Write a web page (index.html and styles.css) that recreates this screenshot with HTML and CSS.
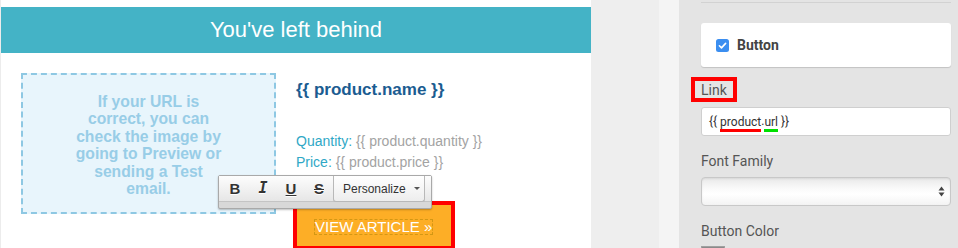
FILE: index.html
```html
<!DOCTYPE html>
<html>
<head>
<meta charset="utf-8">
<link rel="stylesheet" href="styles.css">
</head>
<body>
<div class="app">
  <div class="email">
    <div class="hdr">You've left behind</div>
    <div class="row">
      <div class="ph"><div class="ph-text">If your URL is<br>correct, you can<br>check the image by<br>going to Preview or<br>sending a Test<br>email.</div></div>
      <div class="info">
        <div class="pname">{{ product.name }}</div>
        <div class="meta first"><span class="k">Quantity:</span> <span class="v">{{ product.quantity }}</span></div>
        <div class="meta"><span class="k">Price:</span> <span class="v">{{ product.price }}</span></div>
        <a class="btn"><span class="btn-txt">VIEW ARTICLE »</span></a>
      </div>
    </div>
    <div class="toolbar">
      <div class="tb-row">
        <span class="tb-b b">B</span>
        <span class="tb-b i">I</span>
        <span class="tb-b u">U</span>
        <span class="tb-b s">S</span>
        <span class="pers">Personalize <span class="caret"></span></span>
      </div>
      <div class="tb-strip"></div>
    </div>
  </div>
  <div class="gut1"></div>
  <div class="gut2"></div>
  <div class="panel">
    <div class="topline"></div>
    <div class="card">
      <span class="cb"><svg width="13" height="13" viewBox="0 0 13 13"><rect x="0" y="0" width="13" height="13" rx="2.5" fill="#3b8ef0"/><path d="M3.4 6.8 L5.5 8.9 L9.6 4.4" fill="none" stroke="#fff" stroke-width="1.6" stroke-linecap="round" stroke-linejoin="round"/></svg></span>
      <span class="cb-label">Button</span>
    </div>
    <div class="lbl-wrap"><span class="lbl hl">Link</span></div>
    <div class="input"><span>{{ </span><span class="ul-red">product</span><span>.</span><span class="ul-green">url</span><span> }}</span></div>
    <div class="lbl">Font Family</div>
    <div class="select"><svg class="arr" width="7" height="11" viewBox="0 0 7 11"><path d="M3.5 0.5 L6.5 4.5 L0.5 4.5 Z M3.5 10.5 L6.5 6.5 L0.5 6.5 Z" fill="#444"/></svg></div>
    <div class="lbl bc">Button Color</div>
    <div class="swatch"></div>
  </div>
</div>
</body>
</html>
```

FILE: styles.css
```css
html, body {
  margin: 0;
  padding: 0;
  background: #e4e4e4;
}
.app {
  display: flex;
  width: 958px;
  height: 248px;
  overflow: hidden;
}
.email {
  position: relative;
  width: 590px;
  border-left: 1px solid #ececec;
  background: #fff;
  padding-top: 7px;
  font-family: "Liberation Sans", Arial, sans-serif;
  flex: none;
}
.hdr {
  height: 46px;
  line-height: 46px;
  background: #44b3c6;
  color: #fff;
  font-size: 22px;
  text-align: center;
}
.row {
  display: flex;
  padding: 20px 0 0 20px;
}
.ph {
  width: 255px;
  height: 141px;
  box-sizing: border-box;
  border: 2px dashed #8ec8e3;
  background: #e8f5fc;
  display: flex;
  align-items: center;
  justify-content: center;
  flex: none;
}
.ph-text {
  padding-top: 3px;
  color: #98cde7;
  font-weight: bold;
  font-size: 15.7px;
  line-height: 17.5px;
  text-align: center;
}
.info {
  margin-left: 20px;
  padding-top: 7px;
}
.pname {
  font-size: 17px;
  font-weight: bold;
  line-height: 20px;
  color: #1b5c91;
}
.meta {
  font-size: 14px;
  line-height: 21px;
}
.meta.first {
  margin-top: 31px;
}
.k {
  color: #2fa8c6;
}
.v {
  color: #a3a3a3;
}
.btn {
  display: inline-block;
  margin-top: 28px;
  margin-left: -3px;
  border: 4px solid #ff0000;
  background: #fdae26;
  padding: 13px 18px 10px 17px;
}
.btn-txt {
  display: inline-block;
  border: 1px dashed #d39714;
  color: #fff;
  font-size: 15px;
  line-height: 14px;
}
.toolbar {
  position: absolute;
  left: 217px;
  top: 175px;
  width: 212px;
  border: 1px solid #a9a9a9;
  border-radius: 2px;
  box-shadow: 0 1px 2px rgba(0, 0, 0, 0.25);
  background: #d8d8d8;
}
.tb-row {
  display: flex;
  align-items: flex-start;
  height: 26px;
  padding-left: 2px;
  background: linear-gradient(#fdfdfd, #e6e6e6);
  border-bottom: 1px solid #c4c4c4;
  box-sizing: border-box;
}
.tb-b {
  width: 28px;
  height: 25px;
  line-height: 25px;
  text-align: center;
  font-size: 15px;
  font-weight: bold;
  color: #333;
  text-shadow: 0 1px 0 #fff;
  flex: none;
}
.tb-b.i {
  font-family: "DejaVu Sans Mono", monospace;
  font-style: italic;
  font-size: 15px;
}
.tb-b.u {
  text-decoration: underline;
}
.tb-b.s {
  text-decoration: line-through;
}
.pers {
  box-sizing: border-box;
  width: 92px;
  height: 26px;
  border: 1px solid #b8b8b8;
  border-top: none;
  border-radius: 0 0 3px 3px;
  background: linear-gradient(#ffffff, #ededed);
  font-size: 12px;
  line-height: 24px;
  color: #333;
  padding-left: 9px;
  display: flex;
  align-items: center;
  flex: none;
}
.caret {
  width: 0;
  height: 0;
  margin-left: 8px;
  border-left: 3px solid transparent;
  border-right: 3px solid transparent;
  border-top: 3px solid #555;
}
.tb-strip {
  height: 6px;
}
.gut1 {
  width: 68px;
  background: #eeeeee;
  flex: none;
}
.gut2 {
  width: 20px;
  background: #f4f4f4;
  flex: none;
}
.panel {
  width: 250px;
  padding: 0 7px 0 22px;
  background: #e4e4e4;
  font-family: Roboto, "Liberation Sans", sans-serif;
  flex: none;
}
.topline {
  height: 2px;
  border-bottom: 1px solid #d2d2d2;
}
.card {
  margin-top: 20px;
  height: 44px;
  background: #fff;
  border-radius: 3px;
  box-shadow: 0 1px 1px rgba(0, 0, 0, 0.15);
  display: flex;
  align-items: center;
  padding-left: 15px;
}
.cb {
  display: flex;
  width: 13px;
  height: 13px;
}
.cb-label {
  margin-left: 8px;
  font-size: 14px;
  font-weight: bold;
  color: #444;
}
.lbl-wrap {
  margin-top: 10px;
}
.lbl {
  font-size: 14px;
  line-height: 20px;
  color: #555;
  margin-top: 15px;
}
.lbl.hl {
  display: inline-block;
  margin: 0 0 0 -10px;
  border: 4px solid #ff0000;
  padding: 2px 6px 0 6px;
  line-height: 15px;
}
.input {
  margin-top: 5px;
  height: 29px;
  box-sizing: border-box;
  border: 1px solid #cfcfcf;
  border-radius: 3px;
  background: #fff;
  padding-left: 7px;
  font-size: 12px;
  line-height: 27px;
  color: #333;
  display: flex;
  align-items: center;
  white-space: pre;
}
.ul-red, .ul-green {
  display: inline-block;
  line-height: 13px;
  height: 13px;
  margin-top: 4px;
  border-bottom: 3px solid #ff0000;
}
.ul-green {
  border-bottom-color: #00e000;
}
.select {
  margin-top: 6px;
  height: 29px;
  box-sizing: border-box;
  border: 1px solid #c8c8c8;
  border-radius: 4px;
  background: linear-gradient(#e9e9e9, #fafafa 40%, #ffffff 60%, #f3f3f3);
  box-shadow: inset 0 1px 2px rgba(0, 0, 0, 0.08);
  display: flex;
  align-items: center;
  justify-content: flex-end;
  padding-right: 5px;
}
.bc {
  margin-top: 15px;
}
.swatch {
  margin-top: 5px;
  width: 24px;
  height: 20px;
  background: #8a8a8a;
  border: 1px solid #a0a0a0;
  box-sizing: border-box;
}
```
